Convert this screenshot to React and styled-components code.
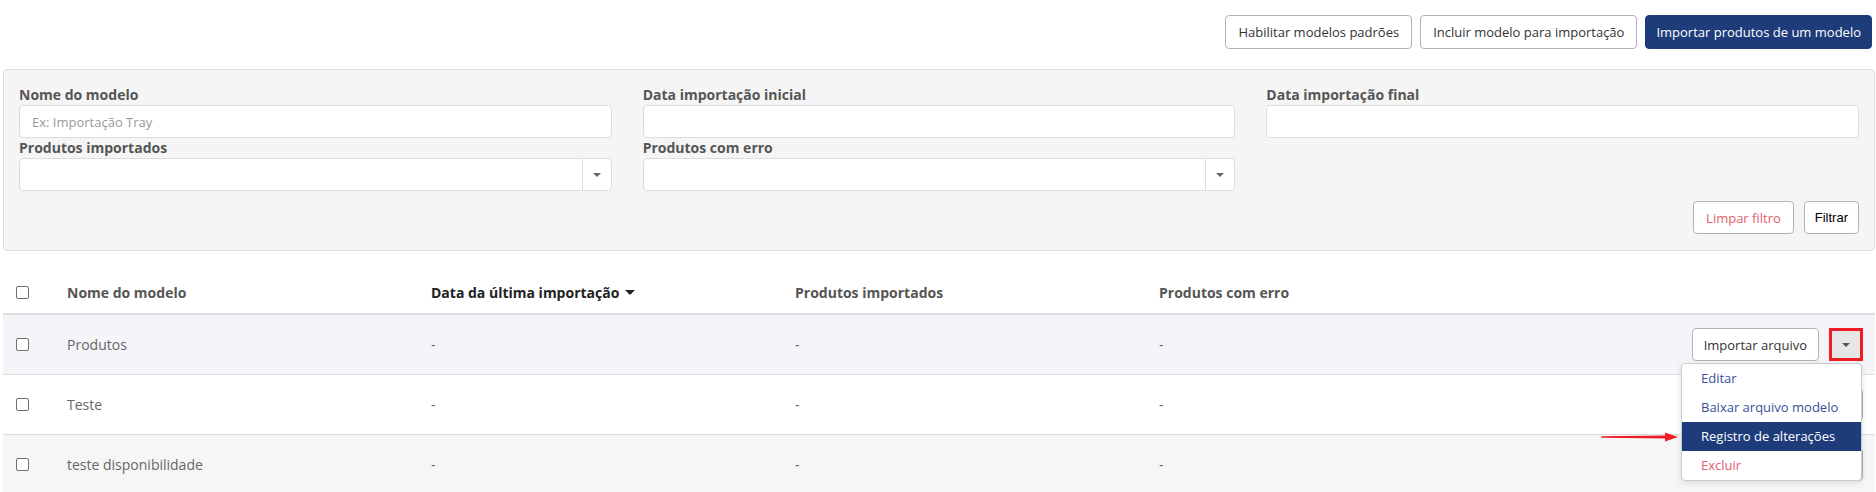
import React from 'react';
import styled, { createGlobalStyle } from 'styled-components';

const GlobalStyle = createGlobalStyle`
  body {
    margin: 0;
    background: #fff;
    font-family: "Open Sans", "Liberation Sans", sans-serif;
    color: #333;
  }
`;

const Page = styled.div`
  padding: 0 1px 0 3px;
`;

const Toolbar = styled.div`
  display: flex;
  justify-content: flex-end;
  gap: 8px;
  padding: 15px 3px 0 0;
  margin-bottom: 20px;
`;

const ToolButton = styled.button`
  height: 34px;
  padding: 0 ${p => (p.primary ? 10 : 12)}px;
  border-radius: 4px;
  font-family: "Open Sans", sans-serif;
  font-size: 13px;
  border: 1px solid ${p => (p.primary ? '#1e3c7a' : '#b3b3b3')};
  background: ${p => (p.primary ? '#1e3c7a' : '#fff')};
  color: ${p => (p.primary ? '#fff' : '#333')};
`;

const FilterPanel = styled.div`
  border: 1px solid #ddd;
  border-radius: 4px;
  background: #f5f5f5;
  padding: 15px 15px 16px;
`;

const FieldGrid = styled.div`
  display: grid;
  grid-template-columns: repeat(3, 1fr);
  column-gap: 31px;
`;

const Field = styled.div`
  display: flex;
  flex-direction: column;
`;

const Label = styled.label`
  font-size: 14px;
  font-weight: 700;
  line-height: 20px;
  color: #555;
`;

const TextInput = styled.input`
  box-sizing: border-box;
  height: 33px;
  border: 1px solid #ddd;
  border-radius: 4px;
  background: #fff;
  padding: 0 12px;
  font-family: "Open Sans", sans-serif;
  font-size: 13px;
  color: #333;
  &::placeholder {
    color: #999;
  }
`;

const SelectBox = styled.div`
  box-sizing: border-box;
  height: 33px;
  border: 1px solid #ddd;
  border-radius: 4px;
  background: #fff;
  display: flex;
  justify-content: flex-end;
`;

const SelectArrow = styled.div`
  width: 28px;
  border-left: 1px solid #ddd;
  display: flex;
  align-items: center;
  justify-content: center;
`;

const Caret = styled.span`
  display: inline-block;
  width: 0;
  height: 0;
  border-left: ${p => p.size || 4}px solid transparent;
  border-right: ${p => p.size || 4}px solid transparent;
  border-top: ${p => p.size || 4}px solid ${p => p.color || '#666'};
`;

const FilterActions = styled.div`
  display: flex;
  justify-content: flex-end;
  gap: 10px;
  margin-top: 10px;
`;

const FilterButton = styled.button`
  height: 33px;
  padding: 0 ${p => (p.plain ? 10 : 12)}px;
  border: 1px solid #b3b3b3;
  border-radius: 4px;
  background: #fff;
  font-size: 13px;
  font-family: ${p => (p.plain ? '"Liberation Sans", Arial, sans-serif' : '"Open Sans", sans-serif')};
  color: ${p => p.tone || '#000'};
`;

const Table = styled.div`
  margin-top: 20px;
`;

const columns = '52px 364px 364px 364px 364px 1fr';

const HeaderRow = styled.div`
  display: grid;
  grid-template-columns: ${columns};
  align-items: center;
  height: 42px;
  border-bottom: 2px solid #ddd;
`;

const Row = styled.div`
  display: grid;
  grid-template-columns: ${columns};
  align-items: center;
  height: 59px;
  border-bottom: 1px solid #ddd;
  background: ${p => p.bg || '#fff'};
`;

const CheckCell = styled.div`
  padding-left: 13px;
  display: flex;
  align-items: center;
`;

const Check = styled.input`
  appearance: none;
  margin: 0;
  width: 13px;
  height: 13px;
  border: 1px solid #707070;
  border-radius: 2px;
  background: #fff;
`;

const HeadCell = styled.div`
  padding-left: 12px;
  font-size: 14px;
  font-weight: 700;
  color: ${p => p.color || '#555'};
  display: flex;
  align-items: center;
  gap: 6px;
`;

const Cell = styled.div`
  padding-left: 12px;
  font-size: 14px;
  color: #666;
`;

const ActionsCell = styled.div`
  display: flex;
  justify-content: flex-end;
  padding-right: 12px;
`;

const ButtonGroup = styled.div`
  position: relative;
  display: flex;
  gap: 10px;
`;

const ImportButton = styled.button`
  height: 33px;
  padding: 0 11px;
  border: 1px solid #b3b3b3;
  border-radius: 4px;
  background: #fff;
  font-family: "Open Sans", sans-serif;
  font-size: 13px;
  color: #333;
`;

const ToggleButton = styled.button`
  box-sizing: border-box;
  width: 34px;
  height: 33px;
  padding: 0;
  display: flex;
  align-items: center;
  justify-content: center;
  border-radius: ${p => (p.marked ? '0' : '4px')};
  border: ${p => (p.marked ? '3px solid #ee1c25' : '1px solid #b3b3b3')};
  background: ${p => (p.marked ? '#e6e6e6' : '#fff')};
`;

const Menu = styled.div`
  position: absolute;
  top: calc(100% + 2px);
  right: 1px;
  z-index: 10;
  width: 181px;
  box-sizing: border-box;
  background: #fff;
  border: 1px solid #ccc;
  border-radius: 4px;
  box-shadow: 0 2px 6px rgba(0, 0, 0, 0.12);
`;

const MenuItem = styled.div`
  height: 29px;
  line-height: 29px;
  padding: 0 19px;
  font-size: 13px;
  white-space: nowrap;
  color: ${p => (p.active ? '#fff' : p.tone || '#3a4f98')};
  background: ${p => (p.active ? '#1e3c7a' : 'transparent')};
`;

const Pointer = styled.svg`
  position: absolute;
  right: calc(100% + 3px);
  top: 67px;
`;

const rows = [
  { name: 'Produtos', bg: '#f5f5f9', open: true },
  { name: 'Teste', bg: '#fff' },
  { name: 'teste disponibilidade', bg: '#f6f6f6' },
];

const RowActions = ({ open }) => (
  <ActionsCell>
    <ButtonGroup>
      <ImportButton>Importar arquivo</ImportButton>
      <ToggleButton marked={open}>
        <Caret size={4} color="#555" />
      </ToggleButton>
      {open && (
        <Menu>
          <MenuItem>Editar</MenuItem>
          <MenuItem>Baixar arquivo modelo</MenuItem>
          <MenuItem active>Registro de alterações</MenuItem>
          <MenuItem tone="#e0606c">Excluir</MenuItem>
          <Pointer width="78" height="12" viewBox="0 0 78 12">
            <path d="M1 6 L66 5.2 L66 6.8 Z" fill="#ee1c25" stroke="#ee1c25" strokeWidth="1.6" strokeLinejoin="round" />
            <polygon points="64,1.5 77,6 64,10.5" fill="#ee1c25" />
          </Pointer>
        </Menu>
      )}
    </ButtonGroup>
  </ActionsCell>
);

const App = () => (
  <Page>
    <GlobalStyle />
    <Toolbar>
      <ToolButton>Habilitar modelos padrões</ToolButton>
      <ToolButton>Incluir modelo para importação</ToolButton>
      <ToolButton primary>Importar produtos de um modelo</ToolButton>
    </Toolbar>

    <FilterPanel>
      <FieldGrid>
        <Field>
          <Label>Nome do modelo</Label>
          <TextInput placeholder="Ex: Importação Tray" />
        </Field>
        <Field>
          <Label>Data importação inicial</Label>
          <TextInput />
        </Field>
        <Field>
          <Label>Data importação final</Label>
          <TextInput />
        </Field>
        <Field>
          <Label>Produtos importados</Label>
          <SelectBox>
            <SelectArrow><Caret /></SelectArrow>
          </SelectBox>
        </Field>
        <Field>
          <Label>Produtos com erro</Label>
          <SelectBox>
            <SelectArrow><Caret /></SelectArrow>
          </SelectBox>
        </Field>
      </FieldGrid>
      <FilterActions>
        <FilterButton tone="#e0606c">Limpar filtro</FilterButton>
        <FilterButton plain>Filtrar</FilterButton>
      </FilterActions>
    </FilterPanel>

    <Table>
      <HeaderRow>
        <CheckCell><Check type="checkbox" readOnly /></CheckCell>
        <HeadCell>Nome do modelo</HeadCell>
        <HeadCell color="#222">
          Data da última importação <Caret size={5} color="#222" />
        </HeadCell>
        <HeadCell>Produtos importados</HeadCell>
        <HeadCell>Produtos com erro</HeadCell>
        <div />
      </HeaderRow>
      {rows.map(r => (
        <Row key={r.name} bg={r.bg}>
          <CheckCell><Check type="checkbox" readOnly /></CheckCell>
          <Cell>{r.name}</Cell>
          <Cell>-</Cell>
          <Cell>-</Cell>
          <Cell>-</Cell>
          <RowActions open={r.open} />
        </Row>
      ))}
    </Table>
  </Page>
);

export default App;
